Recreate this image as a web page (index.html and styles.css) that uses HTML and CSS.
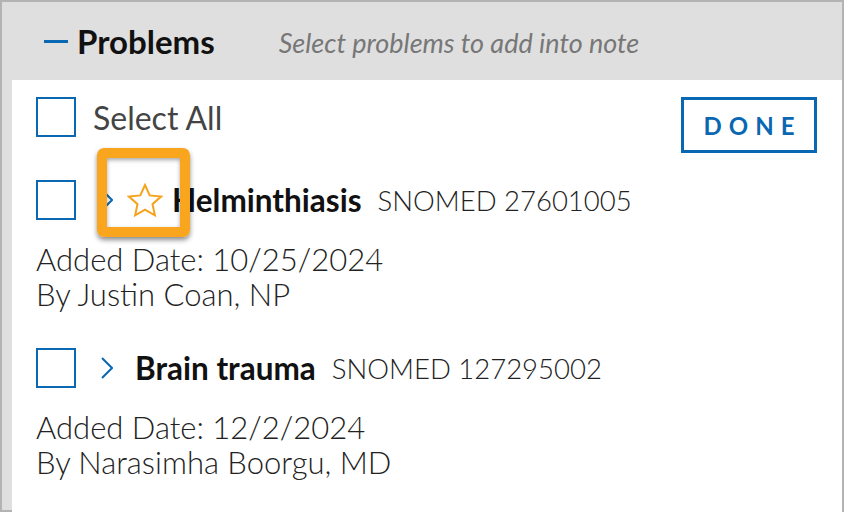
FILE: index.html
```html
<!DOCTYPE html>
<html lang="en">
<head>
    <meta charset="UTF-8">
    <meta name="viewport" content="width=device-width, initial-scale=1.0">
    <title>Problems</title>
    <link rel="stylesheet" href="styles.css">
</head>
<body>

    <div class="panel">
        <div class="header">
            <span class="collapse-bar"></span>
            <h2 class="title">Problems</h2>
            <span class="hint">Select problems to add into note</span>
        </div>

        <div class="content">
            <div class="select-row">
                <label class="select-all">
                    <span class="checkbox"></span>
                    <span>Select All</span>
                </label>
                <button class="done-btn">DONE</button>
            </div>

            <!-- problem list -->
            <div class="item">
                <div class="item-head">
                    <span class="checkbox"></span>
                    <svg class="chevron" width="12" height="22" viewBox="0 0 12 22">
                        <polyline points="1,1 11,11 1,21" fill="none" stroke="#0a67b2" stroke-width="2"/>
                    </svg>
                    <svg class="star" width="36" height="34" viewBox="0 0 36 34">
                        <polygon points="18,2 22.7,12.4 34,13.6 25.5,21.2 27.9,32.3 18,26.6 8.1,32.3 10.5,21.2 2,13.6 13.3,12.4" fill="none" stroke="#f7a21b" stroke-width="2" stroke-linejoin="miter"/>
                    </svg>
                    <span class="item-name">Helminthiasis</span>
                    <span class="item-code">SNOMED 27601005</span>
                    <span class="highlight"></span>
                </div>
                <div class="details">
                    <div>Added Date: 10/25/2024</div>
                    <div>By Justin Coan, NP</div>
                </div>
            </div>

            <div class="item">
                <div class="item-head">
                    <span class="checkbox"></span>
                    <svg class="chevron" width="12" height="22" viewBox="0 0 12 22">
                        <polyline points="1,1 11,11 1,21" fill="none" stroke="#0a67b2" stroke-width="2"/>
                    </svg>
                    <span class="item-name no-star">Brain trauma</span>
                    <span class="item-code">SNOMED 127295002</span>
                </div>
                <div class="details">
                    <div>Added Date: 12/2/2024</div>
                    <div>By Narasimha Boorgu, MD</div>
                </div>
            </div>
        </div>
    </div>

</body>
</html>
```

FILE: styles.css
```css
body {
    margin: 0;
    font-family: Lato, "Open Sans", sans-serif;
    background: white;
}

.panel {
    box-sizing: border-box;
    width: 844px;
    height: 512px;
    border: 2px solid #b3b3b3;
    background-color: #dfdfdf;
    padding-left: 10px;
    display: flex;
    flex-direction: column;
}

.header {
    height: 78px;
    flex-shrink: 0;
    display: flex;
    align-items: center;
    padding-left: 32px;
}

.collapse-bar {
    width: 24px;
    height: 3px;
    background-color: #0a67b2;
    margin-right: 9px;
    margin-top: 1px;
}

.title {
    margin: 0;
    font-size: 33px;
    font-weight: bold;
    color: #111;
}

.hint {
    margin-left: 64px;
    margin-top: 2px;
    font-size: 27px;
    font-style: italic;
    color: #777;
}

.content {
    flex: 1;
    background: white;
    padding: 17px 25px 0 24px;
}

.select-row {
    display: flex;
    justify-content: space-between;
    align-items: flex-start;
    margin-bottom: 27px;
}

.select-all {
    display: flex;
    align-items: center;
    font-size: 32px;
    color: #444;
}

.checkbox {
    box-sizing: border-box;
    width: 40px;
    height: 40px;
    border: 2px solid #0a67b2;
    flex-shrink: 0;
}

.select-all .checkbox {
    margin-right: 17px;
}

.done-btn {
    box-sizing: border-box;
    width: 136px;
    height: 56px;
    border: 3px solid #0a67b2;
    background: white;
    color: #0a67b2;
    font-family: Lato, sans-serif;
    font-size: 24px;
    font-weight: bold;
    letter-spacing: 7px;
    padding: 0 0 0 7px;
    cursor: pointer;
}

.item {
    margin-bottom: 36px;
}

.item-head {
    position: relative;
    display: flex;
    align-items: center;
    height: 40px;
}

.chevron {
    margin-left: 25px;
    flex-shrink: 0;
}

.star {
    margin-left: 14px;
    flex-shrink: 0;
}

.item-name {
    margin-left: 9px;
    font-size: 31.5px;
    font-weight: bold;
    color: #111;
}

.item-name.no-star {
    margin-left: 22px;
}

.item-code {
    margin-left: 16px;
    font-size: 27.5px;
    font-weight: 300;
    color: #222;
}

.highlight {
    position: absolute;
    left: 61px;
    top: -32px;
    box-sizing: border-box;
    width: 93px;
    height: 89px;
    border: 10px solid #f9a51d;
    border-radius: 7px;
    box-shadow: 0 3px 5px rgba(0, 0, 0, 0.45), inset 0 2px 4px rgba(0, 0, 0, 0.35);
}

.details {
    margin-top: 22px;
    font-size: 31px;
    font-weight: 300;
    line-height: 35px;
    color: #222;
}
```
